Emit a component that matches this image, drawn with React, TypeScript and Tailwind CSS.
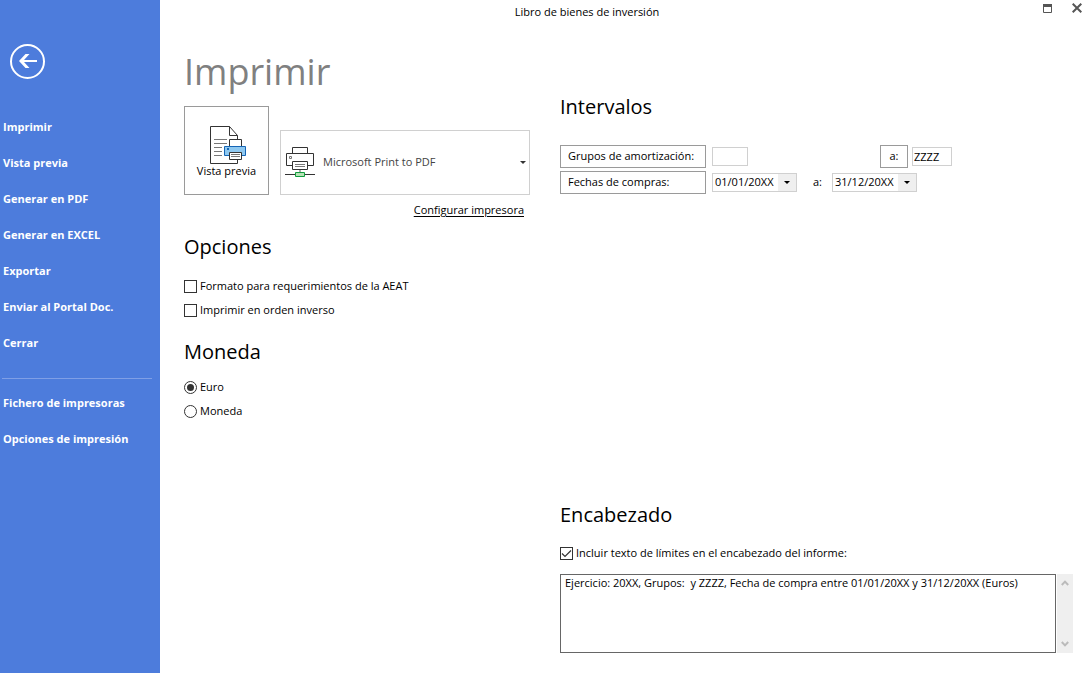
import { useState } from 'react'
import type { ReactNode } from 'react'

const MAIN_LINKS = [
  'Imprimir',
  'Vista previa',
  'Generar en PDF',
  'Generar en EXCEL',
  'Exportar',
  'Enviar al Portal Doc.',
  'Cerrar',
]

const SETUP_LINKS = ['Fichero de impresoras', 'Opciones de impresión']

function BackIcon() {
  return (
    <svg width="35" height="35" viewBox="0 0 35 35" fill="none" aria-hidden>
      <circle cx="17.5" cy="17.5" r="16.5" stroke="white" strokeWidth="2" />
      <path d="M9 17 15.5 10h4L14 16H27v2H14l5.5 6h-4Z" fill="white" />
    </svg>
  )
}

function PreviewIcon() {
  return (
    <svg width="39" height="40" viewBox="-2 0 39 40" fill="none" aria-hidden>
      <path d="M28.5 14.5v-4l-8-9h-19v37h27v-4" stroke="#333" />
      <path d="M20.5 1.5v9h8" stroke="#333" />
      <path d="M5 14.5h13M5 18.5h13M5 22.5h8M5 26.5h8M5 30.5h8" stroke="#777" />
      <path d="M20.5 21.5v-7h12v7" fill="white" stroke="#333" />
      <path d="M15.5 21.5h21v9h-21z" fill="#8ec8f0" stroke="#1565b5" />
      <path d="M18 23h2v2h-2z" fill="#1565b5" />
      <path d="M20.5 27.5h12v7h-12z" fill="white" stroke="#333" />
      <path d="M22 29.5h9M22 31.5h9" stroke="#777" />
    </svg>
  )
}

function PrinterIcon() {
  return (
    <svg width="30" height="31" viewBox="0 0 30 31" fill="none" aria-hidden>
      <path d="M7.5 6.5v-6h15v6" stroke="#333" />
      <path d="M7.5 18.5h-6v-12h27v12h-6" stroke="#333" />
      <path d="M4.5 9.5h2v2h-2z" stroke="#777" />
      <path d="M7.5 14.5h15v8h-15z" fill="white" stroke="#333" />
      <path d="M10 17.5h10M10 19.5h10" stroke="#777" />
      <path d="M15 23v2" stroke="#aaa" strokeWidth="2" />
      <path d="M0 27.5h30" stroke="#333" />
      <path d="M10.5 25.5h9v4h-9z" fill="#b5e3b5" stroke="#109c3c" />
    </svg>
  )
}

function DropArrow({ className }: { className: string }) {
  return (
    <svg width="6" height="3" viewBox="0 0 6 3" className={className} aria-hidden>
      <path d="M0 0h6L3 3Z" fill="currentColor" />
    </svg>
  )
}

function NavLinks({ items }: { items: string[] }) {
  return (
    <ul>
      {items.map((label) => (
        <li key={label}>
          <a href="#" className="flex h-9 items-center pl-[3px] font-bold text-white">
            {label}
          </a>
        </li>
      ))}
    </ul>
  )
}

function CheckField({
  label,
  checked,
  onChange,
}: {
  label: string
  checked: boolean
  onChange: (next: boolean) => void
}) {
  return (
    <label className="flex h-6 items-center gap-[3px]">
      <span className="grid">
        <input
          type="checkbox"
          checked={checked}
          onChange={(e) => onChange(e.target.checked)}
          className="peer size-[13px] appearance-none border border-[#333] bg-white [grid-area:1/1]"
        />
        <svg
          viewBox="0 0 13 13"
          className="pointer-events-none invisible size-[13px] [grid-area:1/1] peer-checked:visible"
          aria-hidden
        >
          <path d="M2 6.5 5 9.5 11 3.5" fill="none" stroke="#333" strokeWidth="1.2" />
        </svg>
      </span>
      {label}
    </label>
  )
}

function RadioField({
  label,
  checked,
  onSelect,
}: {
  label: string
  checked: boolean
  onSelect: () => void
}) {
  return (
    <label className="flex h-6 items-center gap-[3px]">
      <span className="grid place-items-center">
        <input
          type="radio"
          name="moneda"
          checked={checked}
          onChange={onSelect}
          className="peer size-[13px] appearance-none rounded-full border border-[#333] bg-white [grid-area:1/1]"
        />
        <span className="pointer-events-none invisible size-[7px] rounded-full bg-[#333] [grid-area:1/1] peer-checked:visible" />
      </span>
      {label}
    </label>
  )
}

function DateSelect({ label, value }: { label: string; value: string }) {
  return (
    <div className="grid h-[19px] w-[85px] items-center">
      <select
        aria-label={label}
        className="h-[19px] w-full appearance-none border border-[#d0d0d0] bg-white pl-0.5 [grid-area:1/1]"
      >
        <option>{value}</option>
      </select>
      <span className="pointer-events-none mr-px flex h-[17px] w-[18px] items-center justify-center justify-self-end bg-[#efefef] [grid-area:1/1]">
        <DropArrow className="text-black" />
      </span>
    </div>
  )
}

function SectionTitle({ children }: { children: ReactNode }) {
  return <h2 className="text-[20px] leading-8">{children}</h2>
}

export default function App() {
  const [aeat, setAeat] = useState(false)
  const [reverse, setReverse] = useState(false)
  const [includeLimits, setIncludeLimits] = useState(true)
  const [currency, setCurrency] = useState('Euro')

  return (
    <div className="flex min-h-screen bg-white font-['Open_Sans','Noto_Sans',sans-serif] text-[11px] text-black">
      <nav className="w-40 shrink-0 bg-[#4d7cdc] pt-11">
        <button type="button" aria-label="Volver" className="ml-2.5 block">
          <BackIcon />
        </button>
        <div className="mt-[30px]">
          <NavLinks items={MAIN_LINKS} />
        </div>
        <hr className="mt-[17px] mr-2 mb-[6px] ml-0.5 border-[#7f9fe6]" />
        <NavLinks items={SETUP_LINKS} />
      </nav>

      <div className="flex min-w-0 flex-1 flex-col">
        <header className="flex h-6 shrink-0 items-center">
          <p className="flex-1 text-center">Libro de bienes de inversión</p>
          <div className="flex w-[76px] justify-end gap-5 pr-2 pb-2">
            <button type="button" aria-label="Maximizar">
              <svg width="9" height="10" viewBox="0 0 9 10" fill="none" aria-hidden>
                <path d="M.5 1.5h8v8h-8z" stroke="#555" />
                <path d="M0 2.5h9" stroke="#555" strokeWidth="3" />
              </svg>
            </button>
            <button type="button" aria-label="Cerrar ventana">
              <svg width="10" height="10" viewBox="0 0 10 10" fill="none" aria-hidden>
                <path d="m.7.7 8.6 8.6M9.3.7.7 9.3" stroke="#555" strokeWidth="2" />
              </svg>
            </button>
          </div>
        </header>

        <main className="flex flex-1 gap-[30px] pt-6 pr-[17px] pb-5 pl-6">
          <div className="w-[346px] shrink-0">
            <h1 className="text-[36px] leading-[48px] text-[#808080]">Imprimir</h1>
            <div className="mt-2.5 flex items-end gap-[11px]">
              <button
                type="button"
                className="flex h-[89px] w-[85px] flex-col items-center justify-center border border-[#9a9a9a]"
              >
                <PreviewIcon />
                <span className="leading-[11px]">Vista previa</span>
              </button>
              <div className="grid flex-1 items-center">
                <select
                  aria-label="Impresora"
                  className="h-[65px] w-full appearance-none border border-[#d0d0d0] bg-white pl-[42px] text-[#444] [grid-area:1/1]"
                >
                  <option>Microsoft Print to PDF</option>
                </select>
                <span className="pointer-events-none flex items-center justify-between pr-1 pl-[5px] [grid-area:1/1]">
                  <PrinterIcon />
                  <DropArrow className="text-[#333]" />
                </span>
              </div>
            </div>
            <div className="mt-[3px] flex h-6 items-center justify-end pr-1.5">
              <a href="#" className="underline underline-offset-2">
                Configurar impresora
              </a>
            </div>

            <section className="mt-[9px]">
              <SectionTitle>Opciones</SectionTitle>
              <div className="mt-[11px]">
                <CheckField label="Formato para requerimientos de la AEAT" checked={aeat} onChange={setAeat} />
                <CheckField label="Imprimir en orden inverso" checked={reverse} onChange={setReverse} />
              </div>
            </section>

            <section className="mt-[14px]">
              <SectionTitle>Moneda</SectionTitle>
              <div className="mt-[7px]">
                {['Euro', 'Moneda'].map((name) => (
                  <RadioField
                    key={name}
                    label={name}
                    checked={currency === name}
                    onSelect={() => setCurrency(name)}
                  />
                ))}
              </div>
            </section>
          </div>

          <div className="flex min-w-0 flex-1 flex-col pt-[43px]">
            <section>
              <SectionTitle>Intervalos</SectionTitle>
              <div className="mt-[22px] flex items-center">
                <button type="button" className="h-[23px] w-[146px] border border-[#9a9a9a] pl-[7px] text-left">
                  Grupos de amortización:
                </button>
                <input
                  aria-label="Grupo inicial"
                  className="ml-1.5 h-[19px] w-9 border border-[#d0d0d0] px-px"
                />
                <button type="button" className="ml-[132px] h-[23px] w-7 border border-[#9a9a9a]">
                  a:
                </button>
                <input
                  aria-label="Grupo final"
                  defaultValue="ZZZZ"
                  className="ml-1 h-[19px] w-10 border border-[#d0d0d0] px-px"
                />
              </div>
              <div className="mt-[3px] flex items-center">
                <button type="button" className="h-[23px] w-[146px] border border-[#9a9a9a] pl-[7px] text-left">
                  Fechas de compras:
                </button>
                <div className="ml-1.5">
                  <DateSelect label="Fecha inicial" value="01/01/20XX" />
                </div>
                <span className="w-[35px] pl-4">a:</span>
                <DateSelect label="Fecha final" value="31/12/20XX" />
              </div>
            </section>

            <section className="mt-auto">
              <SectionTitle>Encabezado</SectionTitle>
              <div className="mt-2.5">
                <CheckField
                  label="Incluir texto de límites en el encabezado del informe:"
                  checked={includeLimits}
                  onChange={setIncludeLimits}
                />
              </div>
              <div className="mt-[9px] flex h-[79px] gap-px">
                <textarea
                  aria-label="Texto del encabezado"
                  defaultValue="Ejercicio: 20XX, Grupos:  y ZZZZ, Fecha de compra entre 01/01/20XX y 31/12/20XX (Euros)"
                  className="min-w-0 flex-1 resize-none overflow-hidden border border-[#666] px-1 leading-4"
                />
                <div className="flex w-4 flex-col items-center justify-between bg-[#efefef] py-1.5">
                  <svg width="8" height="6" viewBox="0 0 8 6" fill="none" aria-hidden>
                    <path d="m.8 5 3.2-3.4L7.2 5" stroke="#bbb" strokeWidth="2" />
                  </svg>
                  <svg width="8" height="6" viewBox="0 0 8 6" fill="none" aria-hidden>
                    <path d="M.8 1 4 4.4 7.2 1" stroke="#bbb" strokeWidth="2" />
                  </svg>
                </div>
              </div>
            </section>
          </div>
        </main>
      </div>
    </div>
  )
}
